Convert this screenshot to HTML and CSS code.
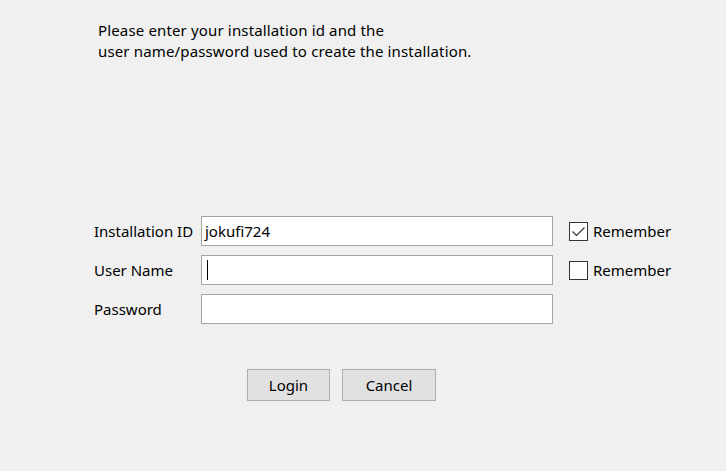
FILE: index.html
```html
<!DOCTYPE html>
<html lang="en">
<head>
<meta charset="UTF-8">
<title>Login</title>
<link rel="stylesheet" href="styles.css">
</head>
<body>
<div class="dialog">
  <p class="intro">Please enter your installation id and the<br>user name/password used to create the installation.</p>
  <div class="form">
    <label class="lbl">Installation ID</label>
    <div class="input">jokufi724</div>
    <div class="remember"><span class="box"><svg width="15" height="15" viewBox="0 0 15 15"><path d="M1.5 7.5 L5.5 11.5 L13.5 3.5" fill="none" stroke="#333" stroke-width="1.2"/></svg></span>Remember</div>
    <label class="lbl">User Name</label>
    <div class="input"><span class="caret"></span></div>
    <div class="remember"><span class="box"></span>Remember</div>
    <label class="lbl">Password</label>
    <div class="input"></div>
    <div></div>
  </div>
  <div class="buttons">
    <button class="btn login">Login</button>
    <button class="btn cancel">Cancel</button>
  </div>
</div>
</body>
</html>
```

FILE: styles.css
```css
*{margin:0;padding:0;box-sizing:border-box}
body{background:#f0f0f0;width:726px;height:471px;overflow:hidden;font-family:'Noto Sans',sans-serif;font-size:15px;color:#000}
.dialog{display:flex;flex-direction:column;padding-top:20px}
.intro{padding-left:98px;line-height:21px;letter-spacing:0.15px}
.form{display:grid;grid-template-columns:107px 352px auto;row-gap:9px;margin-top:154px;margin-left:94px;align-items:center}
.lbl{display:block;line-height:30px;white-space:nowrap}
.input{height:30px;background:#fff;border:1px solid #a4a4a4;padding:0 3px;display:flex;align-items:center}
.caret{display:block;width:1px;height:20px;background:#000;margin-left:2px}
.remember{display:flex;align-items:center;gap:5px;margin-left:16px}
.box{width:19px;height:19px;border:1px solid #333;background:#fff;display:flex;align-items:center;justify-content:center}
.buttons{display:flex;gap:12px;margin-top:45px;margin-left:247px}
.btn{height:32px;background:#e1e1e1;border:1px solid #adadad;font-family:'Noto Sans',sans-serif;font-size:15px;color:#000}
.login{width:83px}
.cancel{width:94px}
```
